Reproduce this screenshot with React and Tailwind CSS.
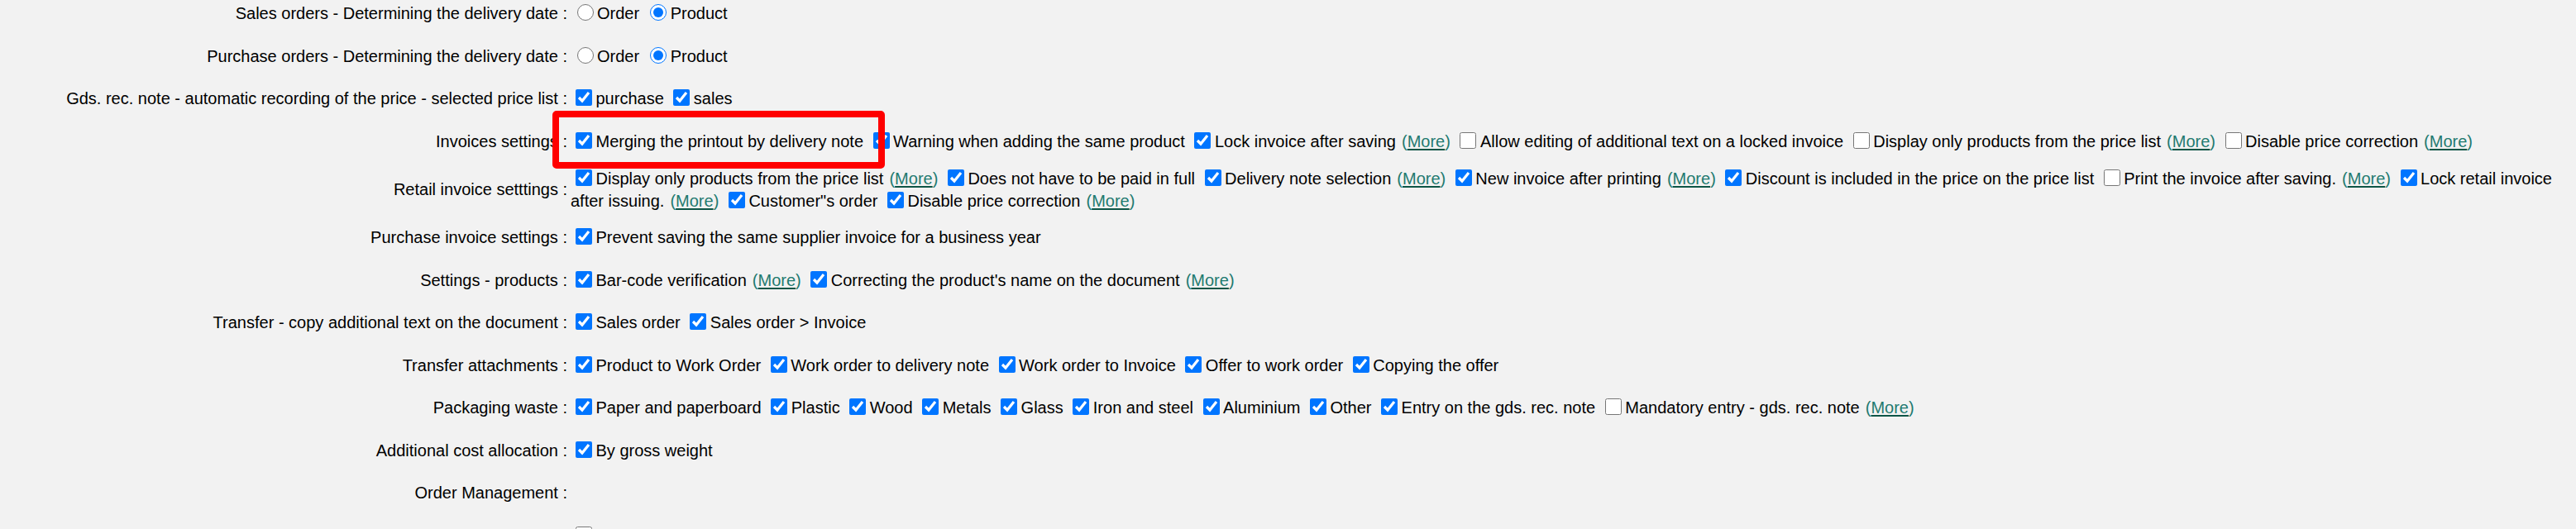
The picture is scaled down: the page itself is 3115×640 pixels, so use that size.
import React from "react";

const rows = [
    {
        label: "Sales orders - Determining the delivery date",
        radios: { name: "so", options: ["Order", "Product"], selected: "Product" },
    },
    {
        label: "Purchase orders - Determining the delivery date",
        radios: { name: "po", options: ["Order", "Product"], selected: "Product" },
    },
    {
        label: "Gds. rec. note - automatic recording of the price - selected price list",
        items: [
            { text: "purchase", checked: true },
            { text: "sales", checked: true },
        ],
    },
    {
        label: "Invoices settings",
        items: [
            { text: "Merging the printout by delivery note", checked: true },
            { text: "Warning when adding the same product", checked: true },
            { text: "Lock invoice after saving", checked: true, more: true },
            { text: "Allow editing of additional text on a locked invoice", checked: false },
            { text: "Display only products from the price list", checked: false, more: true },
            { text: "Disable price correction", checked: false, more: true },
        ],
    },
    {
        label: "Retail invoice setttings",
        items: [
            { text: "Display only products from the price list", checked: true, more: true },
            { text: "Does not have to be paid in full", checked: true },
            { text: "Delivery note selection", checked: true, more: true },
            { text: "New invoice after printing", checked: true, more: true },
            { text: "Discount is included in the price on the price list", checked: true },
            { text: "Print the invoice after saving.", checked: false, more: true },
            { text: "Lock retail invoice after issuing.", checked: true, more: true },
            { text: "Customer\"s order", checked: true },
            { text: "Disable price correction", checked: true, more: true },
        ],
    },
    {
        label: "Purchase invoice settings",
        items: [
            { text: "Prevent saving the same supplier invoice for a business year", checked: true },
        ],
    },
    {
        label: "Settings - products",
        items: [
            { text: "Bar-code verification", checked: true, more: true },
            { text: "Correcting the product's name on the document", checked: true, more: true },
        ],
    },
    {
        label: "Transfer - copy additional text on the document",
        items: [
            { text: "Sales order", checked: true },
            { text: "Sales order > Invoice", checked: true },
        ],
    },
    {
        label: "Transfer attachments",
        items: [
            { text: "Product to Work Order", checked: true },
            { text: "Work order to delivery note", checked: true },
            { text: "Work order to Invoice", checked: true },
            { text: "Offer to work order", checked: true },
            { text: "Copying the offer", checked: true },
        ],
    },
    {
        label: "Packaging waste",
        items: [
            { text: "Paper and paperboard", checked: true },
            { text: "Plastic", checked: true },
            { text: "Wood", checked: true },
            { text: "Metals", checked: true },
            { text: "Glass", checked: true },
            { text: "Iron and steel", checked: true },
            { text: "Aluminium", checked: true },
            { text: "Other", checked: true },
            { text: "Entry on the gds. rec. note", checked: true },
            { text: "Mandatory entry - gds. rec. note", checked: false, more: true },
        ],
    },
    {
        label: "Additional cost allocation",
        items: [{ text: "By gross weight", checked: true }],
    },
    {
        label: "Order Management",
        items: [],
    },
    {
        label: "Delivery services",
        items: [{ text: "Use tracking number", checked: false }],
    },
];

function MoreLink() {
    return (
        <a href="#" className="ml-[7px] text-[#1f7a70]">
            (<span className="underline decoration-[#0d5546] decoration-2 underline-offset-2">More</span>)
        </a>
    );
}

function App() {
    return (
        <div
            className="relative w-[3115px] h-[640px] overflow-hidden bg-[#f2f2f2] text-black text-[20px]"
            style={{ fontFamily: '"Liberation Sans", Arial, sans-serif' }}
        >
            <div className="-mt-[9px]">
                {rows.map((row, i) => (
                    <div key={i} className="flex items-center min-h-[51.5px] py-[5.5px]">
                        <div className="w-[690px] shrink-0 text-right pr-[4px] leading-[27px] whitespace-nowrap">
                            {row.label} :
                        </div>
                        <div className="flex-1 leading-[27px]">
                            {row.radios &&
                                row.radios.options.map((opt) => (
                                    <React.Fragment key={opt}>
                                        <label>
                                            <input
                                                type="radio"
                                                name={row.radios.name}
                                                defaultChecked={opt === row.radios.selected}
                                                className="w-[20px] h-[20px] ml-[7.5px] mr-[4.5px] align-[-2px] accent-[#0075ff]"
                                            />
                                            {opt}
                                        </label>{" "}
                                    </React.Fragment>
                                ))}
                            {row.items &&
                                row.items.map((item, j) => (
                                    <React.Fragment key={j}>
                                        <label>
                                            <input
                                                type="checkbox"
                                                defaultChecked={item.checked}
                                                className="w-[20px] h-[20px] ml-[6px] mr-[4.5px] align-[-2px] accent-[#0075ff]"
                                            />
                                            {item.text}
                                        </label>
                                        {item.more && <MoreLink />}{" "}
                                    </React.Fragment>
                                ))}
                        </div>
                    </div>
                ))}
            </div>

            {/* red annotation box */}
            <div className="absolute left-[668px] top-[134px] w-[402px] h-[70px] border-[8px] border-[#ff0000] rounded-[5px] pointer-events-none"></div>
        </div>
    );
}

export default App;
